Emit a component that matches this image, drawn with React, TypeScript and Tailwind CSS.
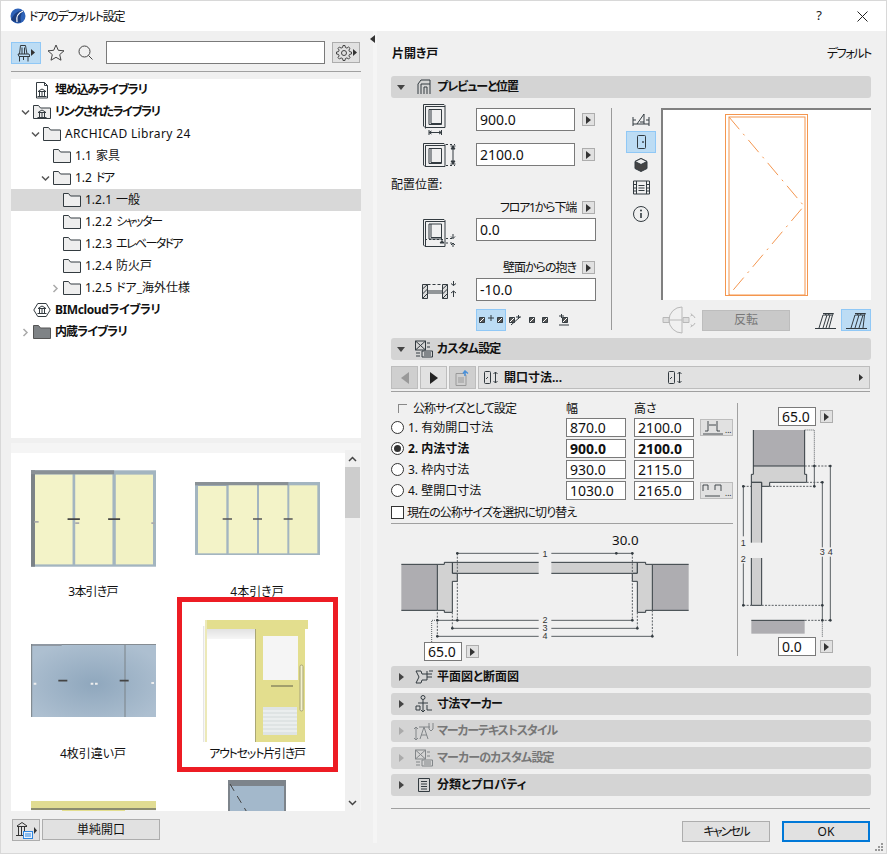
import type { ReactNode } from "react";

const dark = "#333b40";

function Arrow({ className = "" }: { className?: string }) {
  return (
    <button className={`flex h-[13px] w-[13px] shrink-0 items-center justify-center border border-[#adadad] bg-[#e1e1e1] ${className}`}>
      <svg width="5" height="8" viewBox="0 0 5 8"><path d="M0 0l5 4-5 4z" fill="#333" /></svg>
    </button>
  );
}

function Field({ value, className = "", bold = false }: { value: string; className?: string; bold?: boolean }) {
  return (
    <div className={`flex shrink-0 items-center border border-[#7a7a7a] bg-white pl-[3px] text-[14px] leading-none text-[#111] ${bold ? "font-bold" : ""} ${className}`}>
      {value}
    </div>
  );
}

function Ic({ w = 16, h = 16, vb, children, className = "" }: { w?: number; h?: number; vb?: string; children: ReactNode; className?: string }) {
  return (
    <svg width={w} height={h} viewBox={vb ?? `0 0 ${w} ${h}`} fill="none" stroke={dark} strokeWidth="1" className={`shrink-0 ${className}`}>
      {children}
    </svg>
  );
}

function Folder({ dark: filled = false }: { dark?: boolean }) {
  return (
    <Ic w={18} h={16}>
      <path d="M.5 14.5v-13h5l2 2.5h10v10.500z" fill={filled ? "#7f8386" : "#eeeeee"} stroke={filled ? "#555" : dark} />
    </Ic>
  );
}

function Bank({ x = 0, y = 0 }: { x?: number; y?: number }) {
  return (
    <g transform={`translate(${x} ${y})`} stroke={dark}>
      <path d="M.5 8.500h9M1 3.500h8M2.500 4v4M5 4v4M7.500 4v4M1.500 3l3.500-2 3.500 2" />
    </g>
  );
}

function Chevron({ color = "#555", open = false }: { color?: string; open?: boolean }) {
  return (
    <svg width="9" height="9" viewBox="0 0 9 9" fill="none" stroke={color} strokeWidth="1.500">
      <path d={open ? "M1 2.500l3.500 3.500 3.500-3.500" : "M2.500 1l3.500 3.500-3.500 3.500"} />
    </svg>
  );
}

type TreeRow = { depth: number; num?: string; label: string; bold?: boolean; chevron?: "open" | "closed" | "muted"; icon: ReactNode; selected?: boolean; fit?: string };

const treeRows: TreeRow[] = [
  {
    depth: 0, label: "埋め込みライブラリ", bold: true, fit: "tracking-[-1.1px]",
    icon: (
      <Ic w={18} h={17}>
        <path d="M3.500.5h8l3 3v12.500h-11z" />
        <path d="M11.500.5v3h3" />
        <Bank x={4} y={6} />
      </Ic>
    ),
  },
  {
    depth: 0, label: "リンクされたライブラリ", bold: true, chevron: "open", fit: "tracking-[-1.4px]",
    icon: (
      <Ic w={18} h={16}>
        <path d="M.5 14.500v-13h5l2 2.500h10v10.500z" fill="#eee" />
        <Bank x={4} y={5} />
      </Ic>
    ),
  },
  { depth: 1, label: "ARCHICAD Library 24", chevron: "open", icon: <Folder />, fit: "tracking-[0.35px]" },
  { depth: 2, num: "1.1", label: "家具", icon: <Folder /> },
  { depth: 2, num: "1.2", label: "ドア", chevron: "open", icon: <Folder />, fit: "tracking-[-1.5px]" },
  { depth: 3, num: "1.2.1", label: "一般", icon: <Folder />, selected: true },
  { depth: 3, num: "1.2.2", label: "シャッター", icon: <Folder />, fit: "tracking-[-1.4px]" },
  { depth: 3, num: "1.2.3", label: "エレベータドア", icon: <Folder />, fit: "tracking-[-1.6px]" },
  { depth: 3, num: "1.2.4", label: "防火戸", icon: <Folder /> },
  { depth: 3, num: "1.2.5", label: "ドア_海外仕様", chevron: "muted", icon: <Folder /> },
  {
    depth: 0, label: "BIMcloudライブラリ", bold: true, fit: "tracking-[-0.4px]",
    icon: (
      <Ic w={18} h={16}>
        <path d="M.8 8l4-6.500h8.400l4 6.500-4 6.500H4.800z" />
        <Bank x={4} y={3} />
      </Ic>
    ),
  },
  { depth: 0, label: "内蔵ライブラリ", bold: true, chevron: "muted", icon: <Folder dark />, fit: "tracking-[-0.9px]" },
];

function Tree() {
  return (
    <div className="mt-[7px] h-[359px] bg-white">
      {treeRows.map((r) => (
        <div key={r.label} className={`flex h-[22px] items-center text-[12px] text-[#111] ${r.selected ? "bg-[#d8d8d8]" : ""}`}>
          <div className="shrink-0" style={{ width: (r.depth + 1) * 10 - 3 }} />
          <div className="flex w-[14px] shrink-0 justify-center">
            {r.chevron && <Chevron open={r.chevron === "open"} color={r.chevron === "muted" ? "#aaa" : "#555"} />}
          </div>
          <div className="ml-px">{r.icon}</div>
          {r.num && <span className="ml-[4px] mr-[4px]">{r.num}</span>}
          <span className={`${r.num ? "" : "ml-[4px]"} ${r.bold ? "font-bold" : ""} ${r.fit ?? ""}`}>{r.label}</span>
        </div>
      ))}
    </div>
  );
}

function Sliding3() {
  return (
    <svg width="125" height="97" viewBox="90 60 376 290">
      <rect x="90" y="60" width="376" height="290" fill="#a3b5c0" />
      <rect x="90" y="60" width="12" height="290" fill="#7b8287" />
      <rect x="90" y="60" width="250" height="12" fill="#8a9196" />
      <rect x="102" y="73" width="113" height="270" fill="#f3f3c8" />
      <rect x="223" y="73" width="112" height="270" fill="#f3f3c8" />
      <rect x="345" y="73" width="112" height="270" fill="#f2f2c4" />
      <path d="M200 207h37M322 207h36" stroke="#444" strokeWidth="5" />
      <path d="M100 215h13M223 219h12M452 219h10" stroke="#aaa" strokeWidth="5" />
    </svg>
  );
}

function Sliding4() {
  return (
    <svg width="125" height="73" viewBox="583 96 375 219">
      <rect x="583" y="96" width="375" height="219" fill="#a3b5c0" />
      <rect x="583" y="96" width="280" height="10" fill="#8a9196" />
      <rect x="592" y="108" width="85" height="202" fill="#f3f3c8" />
      <rect x="684" y="106" width="85" height="204" fill="#f3f3c8" />
      <rect x="775" y="106" width="85" height="204" fill="#f3f3c8" />
      <rect x="866" y="106" width="84" height="204" fill="#f2f2c4" />
      <path d="M666 207h28M757 207h27M849 207h27" stroke="#555" strokeWidth="4" />
    </svg>
  );
}

function BlueSliding() {
  return (
    <svg width="125" height="73" viewBox="91 582 375 219">
      <defs>
        <radialGradient id="bd" cx="0.5" cy="0.55" r="0.6">
          <stop offset="0" stopColor="#8fa7bd" />
          <stop offset="1" stopColor="#adbfd0" />
        </radialGradient>
      </defs>
      <rect x="91" y="582" width="375" height="219" fill="url(#bd)" />
      <path d="M91 585h92M183 583h283" stroke="#858c92" strokeWidth="4" />
      <path d="M93 582v219M373 585v216" stroke="#7b8287" strokeWidth="3" />
      <path d="M173 692h27M357 692h27" stroke="#444" strokeWidth="5" />
      <path d="M270 701h24M99 701h8M452 699h9" stroke="#eee" strokeWidth="6" strokeDasharray="8 5" />
    </svg>
  );
}

function YellowDoor() {
  return (
    <svg width="105" height="123" viewBox="0 0 105 123" className="-ml-[3px] mt-[2px]">
      <defs>
        <linearGradient id="sh" x1="0" y1="0" x2="0" y2="1">
          <stop offset="0" stopColor="#e2e2e2" />
          <stop offset="1" stopColor="#f6f6f6" />
        </linearGradient>
        <linearGradient id="sd" x1="0" y1="0" x2="1" y2="0">
          <stop offset="0" stopColor="#dddddd" />
          <stop offset="1" stopColor="#ffffff" />
        </linearGradient>
      </defs>
      <rect x="0" y="6" width="2" height="116" fill="url(#sd)" />
      <rect x="2" y="0" width="103" height="9" fill="#e3de8e" />
      <rect x="2" y="0" width="2" height="122" fill="#ece9b8" />
      <rect x="4" y="9" width="48" height="10" fill="url(#sh)" />
      <rect x="52" y="9" width="50" height="113" fill="#e3de8e" />
      <rect x="52" y="9" width="1" height="113" fill="#aaa775" />
      <rect x="60" y="16" width="35" height="44" fill="#f5f5f5" />
      <rect x="60" y="87" width="34" height="28" fill="#dfe4e4" />
      <path d="M60 91h34M60 95h34M60 99h34M60 103h34M60 107h34M60 111h34" stroke="#f6f8f8" />
      <path d="M68 66h22" stroke="#8c8a60" strokeWidth="1.500" />
      <rect x="97" y="45" width="3" height="46" rx="1.500" fill="#f3f1ce" stroke="#a6a376" />
    </svg>
  );
}

function YellowWide() {
  return (
    <svg width="125" height="83" viewBox="0 0 125 83">
      <rect width="125" height="8" fill="#e1dc92" />
      <rect y="8" width="125" height="75" fill="#f2f2f2" />
      <rect x="31" y="8" width="63" height="75" fill="#e3de8e" />
      <rect y="7" width="125" height="2" fill="#8c8c70" />
    </svg>
  );
}

function BlueSquare() {
  return (
    <svg width="58" height="125" viewBox="0 0 58 125">
      <rect width="58" height="125" fill="#7d848b" />
      <rect x="2" y="6" width="54" height="119" fill="#a3b8cb" />
      <path d="M2 4l54 90" stroke="#444" strokeDasharray="8 6" />
    </svg>
  );
}

function Thumbs() {
  const items = [
    { art: <Sliding3 />, label: "3本引き戸", fit: "tracking-[-0.8px]" },
    { art: <Sliding4 />, label: "4本引き戸" },
    { art: <BlueSliding />, label: "4枚引違い戸" },
    { art: <YellowDoor />, label: "アウトセット片引き戸", fit: "tracking-[-1.2px]" },
    { art: <YellowWide />, label: "" },
    { art: <BlueSquare />, label: "" },
  ];
  return (
    <div className="relative mt-[5px] flex h-[368px] bg-[#f5f5f5] pt-[10px]">
      <div className="relative h-[358px] w-[334px] overflow-hidden bg-white pt-[3px]">
        <div className="grid w-[328px] grid-cols-2">
          {items.map((it, i) => (
            <div key={i} className="flex h-[162px] flex-col items-center">
              <div className="flex h-[125px] items-center justify-center">{it.art}</div>
              <div className={`mt-[2px] flex h-[18px] items-center whitespace-nowrap text-[12px] text-[#111] ${it.fit ?? ""}`}>{it.label}</div>
            </div>
          ))}
        </div>
        <div className="absolute left-[166px] top-[144px] h-[175px] w-[161px] border-[5px] border-[#ed1c24]" />
      </div>
      <div className="relative -mt-[3px] flex h-[361px] w-[15px] flex-col items-center bg-[#f0f0f0]">
        <div className="flex h-[17px] items-center">
          <svg width="9" height="6" viewBox="0 0 9 6" fill="none" stroke="#444" strokeWidth="1.500"><path d="M1 5l3.500-3.500 3.500 3.500" /></svg>
        </div>
        <div className="h-[51px] w-[15px] bg-[#cdcdcd]" />
        <div className="mt-auto flex h-[17px] items-center">
          <svg width="9" height="6" viewBox="0 0 9 6" fill="none" stroke="#444" strokeWidth="1.500"><path d="M1 1l3.500 3.500 3.500-3.500" /></svg>
        </div>
      </div>
    </div>
  );
}

function LeftColumn() {
  return (
    <div className="w-[350px] shrink-0">
      <div className="flex h-[23px] items-center">
        <button className="flex h-[22px] w-[30px] items-center justify-center gap-px border border-[#90c8f6] bg-[#bcdcf4]">
          <Ic w={13} h={18}>
            <path d="M2.500 10L3.500 1.500h5L10 10M1 10h11l1 2.500H2zM2.500 12.500V17.500M6.500 12.500V16M11 12.500V17.500M5 10V3.500M7.500 10V3.500" />
          </Ic>
          <svg width="4" height="7" viewBox="0 0 4 7"><path d="M0 0l4 3.500-4 3.500z" fill="#333" /></svg>
        </button>
        <svg width="18" height="17" viewBox="0 0 18 17" fill="none" stroke="#444" className="ml-[6px]">
          <path d="M9 1l2.300 5.300 5.700.5-4.300 3.800 1.300 5.600L9 13.300 4 16.200l1.300-5.600L1 6.800l5.700-.5z" />
        </svg>
        <svg width="16" height="15" viewBox="0 0 16 15" fill="none" stroke="#444" className="ml-[13px]">
          <circle cx="6.500" cy="6.500" r="5.500" /><path d="M10.500 10.500l4 4" />
        </svg>
        <div className="ml-[12px] h-[23px] w-[219px] border border-[#7a7a7a] bg-white" />
        <button className="ml-[7px] flex h-[21px] w-[28px] items-center justify-center gap-px border border-[#adadad] bg-[#e1e1e1]">
          <svg width="16" height="16" viewBox="0 0 16 16" fill="none" stroke="#444">
            <circle cx="8" cy="8" r="2.500" />
            <path d="M7 .5h2l.4 2 1.500.6 1.700-1.100 1.400 1.400-1.100 1.700.6 1.500 2 .4v2l-2 .4-.6 1.500 1.100 1.700-1.400 1.400-1.700-1.100-1.500.6-.4 2H7l-.4-2-1.500-.6-1.700 1.100-1.400-1.400 1.100-1.700-.6-1.500-2-.4V7l2-.4.6-1.500L2 3.400 3.400 2l1.700 1.100 1.500-.6z" />
          </svg>
          <svg width="4" height="7" viewBox="0 0 4 7"><path d="M0 0l4 3.500-4 3.500z" fill="#333" /></svg>
        </button>
      </div>
      <div className="mt-[7px] h-px bg-[#a0a0a0]" />
      <Tree />
      <Thumbs />
      <div className="mt-[8px] flex h-[22px] items-start">
        <button className="ml-px flex h-[22px] w-[28px] items-center justify-center gap-px border border-[#adadad] bg-[#e1e1e1]">
          <svg width="18" height="18" viewBox="0 0 18 18" fill="none" stroke="#333">
            <path d="M1 14.500h11M2 5.500h10M3.500 6v8M6.500 6v8M9.500 6v8M2 5l5-3.500L12 5" />
            <rect x="8.500" y="10.500" width="9" height="7" fill="#e8f2fc" stroke="#2e86e0" />
            <path d="M10 13h6M10 15h6" stroke="#2e86e0" />
          </svg>
          <svg width="3" height="7" viewBox="0 0 3 7"><path d="M0 0l3 3.500-3 3.500z" fill="#333" /></svg>
        </button>
        <button className="ml-[2px] h-[21px] w-[118px] border border-[#adadad] bg-[#e1e1e1] text-[12px] text-[#111]">単純開口</button>
      </div>
    </div>
  );
}

function Section({ open = false, icon, label, disabled = false, fit = "" }: { open?: boolean; icon: ReactNode; label: string; disabled?: boolean; fit?: string }) {
  return (
    <div className={`flex h-[22px] items-center rounded-[3px] bg-[#d4d4d4] text-[12px] font-bold ${disabled ? "text-[#777]" : "text-[#111]"}`}>
      <div className="flex w-[20px] shrink-0 justify-center">
        {open ? (
          <svg width="8" height="5" viewBox="0 0 8 5"><path d="M0 0h8L4 5z" fill="#444" /></svg>
        ) : (
          <svg width="5" height="8" viewBox="0 0 5 8"><path d="M0 0l5 4-5 4z" fill={disabled ? "#aaa" : "#444"} /></svg>
        )}
      </div>
      <div className={`flex w-[26px] shrink-0 justify-center ${disabled ? "opacity-50" : ""}`}>{icon}</div>
      <span className={fit}>{label}</span>
    </div>
  );
}

function ToolBtn({ active = false, children, className = "" }: { active?: boolean; children: ReactNode; className?: string }) {
  return (
    <div className={`flex h-[22px] w-[30px] shrink-0 items-center justify-center border ${active ? "border-[#90c8f6] bg-[#bcdcf4]" : "border-transparent"} ${className}`}>
      {children}
    </div>
  );
}

const MiniPair = () => (
  <>
    <path d="M.5 3.500h5v5h-5z" fill="#555" />
    <path d="M1 8l4-4" stroke="#fff" />
  </>
);

function LegIcon({ wide = false }: { wide?: boolean }) {
  return (
    <Ic w={21} h={17}>
      <path d="M0 16.500h21" />
      {wide ? (
        <path d="M5 16L9 3h9.500M9 16l4-13M13 16l4-13M17 16l1.500-13M9 1.500h10.500l-1 1.500M11 3l2-1.500M14 3l2-1.500" />
      ) : (
        <path d="M4 16L8 3h9.500M8 16l4-13M11 16l4-13M14 16l3.500-13M8 1.500h10.500l-1 1.500M10 3l2-1.500M13 3l2-1.500" />
      )}
    </Ic>
  );
}

// 3D door box used by the size and position icons
const DoorBox = ({ h = 23 }: { h?: number }) => (
  <>
    <path d={`M.5.5h20.500l1 1v${h - 1}H2l-1.500-1.500z`} />
    <path d={`M2.500 2.500h19.500M2.500 2.500v${h - 1}`} />
    <path d={`M6 5.500h12.500v${h - 8}H6z`} />
    <path d={`M8 5.500v${h - 9}h10.500`} />
  </>
);

function PreviewSection() {
  return (
    <div className="flex h-[240px]">
      <div className="w-[220px] shrink-0 pt-[10px]">
        <div className="flex h-[23px] items-center">
          <div className="flex w-[85px] justify-start pl-[32px]">
            <Ic w={24} h={32}>
              <DoorBox />
              <path d="M6 28.500h12.500M6 26v5M18.500 26v5M6 28.500l2.500-1.500M6 28.500l2.500 1.500M18.500 28.500l-2.500-1.500M18.500 28.500l-2.500 1.500" />
            </Ic>
          </div>
          <Field value="900.0" className="h-[23px] w-[99px]" />
          <Arrow className="ml-[7px]" />
        </div>
        <div className="mt-[12px] flex h-[23px] items-center">
          <div className="flex w-[85px] pl-[32px]">
            <Ic w={34} h={24}>
              <DoorBox />
              <path d="M23 1.500h9M23 22.500h9" strokeDasharray="2 2" />
              <path d="M30 3v18M27.500 3h5M27.500 21h5M30 3l-2 3h4zM30 21l-2-3h4z" fill={dark} />
            </Ic>
          </div>
          <Field value="2100.0" className="h-[23px] w-[99px]" />
          <Arrow className="ml-[7px]" />
        </div>
        <div className="mt-[12px] h-[14px] text-[12px] leading-[14px] text-[#111]">配置位置:</div>
        <div className="mt-[9px] flex h-[13px] items-center justify-end pr-[16px] text-[12px] text-[#111]">
          <span className="mr-[6px] tracking-[-1.2px]">フロア1から下端</span>
          <Arrow />
        </div>
        <div className="mt-[4px] flex h-[23px] items-center">
          <div className="flex w-[85px] pl-[32px]">
            <Ic w={34} h={28} className="mt-[7px]">
              <path d="M.5.5h20.500l1 1v26H2l-1.500-1.500zM2.500 2.500h19.500M2.500 2.500v25" />
              <path d="M6 5h12.500v15H6zM8 5v13.500h10.500" />
              <path d="M2 20.500h20" strokeDasharray="2 2" />
              <path d="M17 24l2-2.500 2 2.500z" fill={dark} />
              <path d="M23 19.500h6M23 24h6" strokeDasharray="2 2" />
              <path d="M30 15v4.500M30 24v4.500M28 17.500l2 2 2-2M28 26l2-2 2 2" />
            </Ic>
          </div>
          <Field value="0.0" className="h-[23px] w-[120px]" />
        </div>
        <div className="mt-[20px] flex h-[13px] items-center justify-end pr-[16px] text-[12px] text-[#111]">
          <span className="mr-[6px] tracking-[-1px]">壁面からの抱き</span>
          <Arrow />
        </div>
        <div className="mt-[4px] flex h-[23px] items-center">
          <div className="flex w-[85px] pl-[31px]">
            <Ic w={36} h={20}>
              <path d="M.5 4.500h5v14h-5zM20.500 4.500h5v14h-5z" fill="#ddd" />
              <path d="M.5 9l5-4.500M.5 14l5-5M.5 18.500l5-5M20.500 9l5-4.500M20.500 14l5-5M20.500 18.500l5-5" />
              <path d="M5.500 4.500h15" strokeDasharray="3 2" />
              <path d="M5.500 11h15M5.500 13h15" />
              <path d="M31.500 1v4.500M31.500 11v6M29 3.500l2.500 2 2.500-2M29 13l2.500-2 2.500 2" />
            </Ic>
          </div>
          <Field value="-10.0" className="h-[23px] w-[120px]" />
        </div>
        <div className="ml-[85px] mt-[8px] flex items-center">
          <ToolBtn active>
            <Ic w={24} h={12}>
              <MiniPair />
              <g transform="translate(18 0)"><MiniPair /></g>
              <path d="M12 1v6M9 4h6" />
            </Ic>
          </ToolBtn>
          <Ic w={13} h={12} className="ml-[3px]">
            <MiniPair />
            <path d="M7 3h5M9.500 1v4M2 11l9-8" />
          </Ic>
          <Ic w={8} h={12} className="ml-[7px]"><MiniPair /></Ic>
          <Ic w={8} h={12} className="ml-[5px]"><MiniPair /></Ic>
          <Ic w={13} h={12} className="ml-[8px]">
            <g transform="translate(4 0)"><MiniPair /></g>
            <path d="M1 2h5M3.500 0v4M1 11h10" />
          </Ic>
        </div>
      </div>
      <div className="mt-[10px] h-[222px] w-px bg-[#9a9a9a]" />
      <div className="ml-[14px] mt-[15px] flex w-[30px] shrink-0 flex-col items-center">
        <Ic w={18} h={14}>
          <path d="M1 4v9M17 4v9M1 11h16M1 7h3M14 7h3M5 11L12 1v10M8 9h4" />
        </Ic>
        <ToolBtn active className="mt-[4px]">
          <Ic w={9} h={14}><rect x=".5" y=".5" width="8" height="13" rx="1" /><circle cx="6" cy="7" r=".5" fill={dark} /></Ic>
        </ToolBtn>
        <Ic w={14} h={14} className="mt-[5px]">
          <path d="M7 .5l6 3v7l-6 3-6-3v-7z" fill="#444" />
          <path d="M7 .5l6 3-6 3-6-3z" fill="#eee" />
        </Ic>
        <Ic w={17} h={15} className="mt-[8px]">
          <path d="M.5 1h16v13H.5zM3.500 1v13M13.500 1v13M.5 4.500h3M.5 8h3M.5 11h3M13.500 4.500h3M13.500 8h3M13.500 11h3M5.500 5.500h6M5.500 8h6M5.500 10.500h6" />
        </Ic>
        <Ic w={16} h={16} className="mt-[11px]">
          <circle cx="8" cy="8" r="7.500" />
          <path d="M8 7v5" strokeWidth="1.600" />
          <circle cx="8" cy="4.500" r="1" fill={dark} stroke="none" />
        </Ic>
      </div>
      <div className="ml-[5px] flex-1 pt-[10px]">
        <div className="h-[192px] w-[210px] border-l-2 border-t-2 border-[#808080] bg-white">
          <svg width="208" height="190" viewBox="663 110 208 190" fill="none" stroke="#f4964f" className="block">
            <rect x="725.500" y="114.500" width="82" height="181" />
            <rect x="729" y="117" width="76" height="178" />
            <path d="M729 117l75 89-75 89" strokeDasharray="16 6 2 6" />
          </svg>
        </div>
        <div className="mt-[9px] flex h-[22px] items-center">
          <svg width="36" height="28" viewBox="0 0 36 28" fill="none" stroke="#b8b8b8" className="-my-[3px] ml-px">
            <path d="M20 1a13 13 0 0 0 0 26zM7 14h13" />
            <path d="M1 11.500h6v5H1zM21 11.500h6v5h-6z" fill="#ddd" />
            <path d="M30 9a5 5 0 0 1 3 3M33 17a5 5 0 0 1-3 3M29 7.500L30 9l-1.500 1M28.500 21l1.500-1-1-1.500" />
          </svg>
          <button className="ml-[4px] h-[21px] w-[88px] border border-[#bdbdbd] bg-[#c9c9c9] text-[12px] text-[#777]">反転</button>
          <div className="ml-[25px]"><LegIcon /></div>
          <ToolBtn active className="ml-[5px]"><LegIcon wide /></ToolBtn>
        </div>
      </div>
    </div>
  );
}

function NavBtn({ muted = false, children }: { muted?: boolean; children: ReactNode }) {
  return (
    <button className={`flex h-[23px] w-[27px] shrink-0 items-center justify-center border border-[#bdbdbd] ${muted ? "bg-[#cfcfcf]" : "bg-[#e1e1e1]"}`}>
      {children}
    </button>
  );
}

const SizeGlyph = () => (
  <Ic w={16} h={13}>
    <rect x=".5" y=".5" width="6" height="12" rx="1" />
    <path d="M11.500 1v11M9.500 3l2-2 2 2M9.500 10l2 2 2-2" />
    <path d="M2 8l2-2" />
  </Ic>
);

function Radio({ checked = false }: { checked?: boolean }) {
  return (
    <span className="flex h-[13px] w-[13px] shrink-0 items-center justify-center rounded-full border border-[#333] bg-white">
      {checked && <span className="h-[7px] w-[7px] rounded-full bg-[#333]" />}
    </span>
  );
}

const sizeRows = [
  { label: "1. 有効開口寸法", w: "870.0", h: "2100.0", glyph: "a" },
  { label: "2. 内法寸法", w: "900.0", h: "2100.0", on: true },
  { label: "3. 枠内寸法", w: "930.0", h: "2115.0" },
  { label: "4. 壁開口寸法", w: "1030.0", h: "2165.0", glyph: "b" },
];

function HorizontalDiagram() {
  const s = "#5a5f63";
  const dot = (x: number, y: number) => <circle key={`${x}-${y}`} cx={x} cy={y} r="4" fill={dark} stroke="none" />;
  return (
    <svg width="342" height="116" viewBox="33 18 1026 348" fill="none" stroke={dark} strokeWidth="3" className="block">
      <rect x="64" y="133" width="108" height="138" fill="#aeadb1" stroke="none" />
      <rect x="817" y="133" width="109" height="138" fill="#aeadb1" stroke="none" />
      <path d="M64 133h108M64 271h108M817 133h109M817 271h109" />
      <path d="M476 127H217v33h259" fill="#cfcfcf" />
      <path d="M514 127h258v33H514" fill="#cfcfcf" />
      <path d="M172 133h21v-6h24v33h15v24h-15v93h-24v-6h-21z" fill="#d2d2d2" />
      <path d="M817 133h-20v-6h-25v33h-15v24h15v93h25v-6h20z" fill="#d2d2d2" />
      <g stroke={s}>
        <path d="M232 100h244M514 100h243" />
        <path d="M172 301h304M514 301h243M217 325h259M514 325h258M172 349h304M514 349h303" />
      </g>
      <g stroke={s} strokeDasharray="6 4">
        <path d="M232 100v200M757 100v200M172 277v72M217 277v48M772 277v48M817 271v78" />
      </g>
      <path d="M155 366v-65h17" stroke={s} strokeDasharray="3 3" />
      {[dot(232, 100), dot(709, 100), dot(757, 100), dot(172, 301), dot(232, 301), dot(757, 301), dot(217, 325), dot(772, 325), dot(172, 349), dot(817, 349)]}
      <g fill="#333" stroke="none" fontSize="27" textAnchor="middle" fontFamily="'Liberation Sans', sans-serif">
        <text x="495" y="110">1</text>
        <text x="495" y="310">2</text>
        <text x="495" y="334">3</text>
        <text x="495" y="358">4</text>
      </g>
      <text x="736" y="75" fontSize="40" fill="#111" stroke="none" textAnchor="middle">30.0</text>
    </svg>
  );
}

function VerticalDiagram() {
  const s = "#5a5f63";
  const dot = (x: number, y: number) => <circle key={`${x}-${y}`} cx={x} cy={y} r="4" fill={dark} stroke="none" />;
  return (
    <svg width="133" height="211" viewBox="1074 198 399 633" fill="none" stroke={dark} strokeWidth="3" className="block">
      <rect x="1120" y="210" width="154" height="108" fill="#aeadb1" stroke="none" />
      <path d="M1120 318V210M1274 318V210" />
      <path d="M1120 318h154v25h6v24h-111v12h-24v-12h-31v-24h6z" fill="#d2d2d2" />
      <path d="M1114 548V367h31v181" fill="#cfcfcf" />
      <path d="M1114 594v142h31V594" fill="#cfcfcf" />
      <rect x="1114" y="781" width="160" height="40" fill="#aeadb1" stroke="none" />
      <path d="M1114 781h160" />
      <g stroke={s}>
        <path d="M1090 379v150M1090 610v126M1327 367v195M1327 590v191M1351 318v244M1351 590v191M1303 318v61" />
      </g>
      <g stroke={s} strokeDasharray="6 4">
        <path d="M1274 318h77M1169 379h134M1090 379h24M1090 736h24M1145 736h182M1280 367h47M1274 781h77" />
      </g>
      <path d="M1274 210h29v108M1327 781v50" stroke={s} strokeDasharray="3 3" />
      {[dot(1090, 379), dot(1090, 736), dot(1303, 318), dot(1303, 379), dot(1327, 367), dot(1351, 318), dot(1327, 736), dot(1327, 781), dot(1351, 781)]}
      <g fill="#333" stroke="none" fontSize="27" textAnchor="middle" fontFamily="'Liberation Sans', sans-serif">
        <text x="1090" y="557">1</text>
        <text x="1090" y="606">2</text>
        <text x="1327" y="585">3</text>
        <text x="1351" y="585">4</text>
      </g>
    </svg>
  );
}

function CustomSection() {
  return (
    <div>
      <div className="mt-[6px] flex gap-[2px] pr-px">
        <NavBtn muted>
          <svg width="8" height="12" viewBox="0 0 8 12"><path d="M8 0L0 6l8 6z" fill="#999" /></svg>
        </NavBtn>
        <NavBtn>
          <svg width="8" height="12" viewBox="0 0 8 12"><path d="M0 0l8 6-8 6z" fill="#222" /></svg>
        </NavBtn>
        <NavBtn muted>
          <svg width="16" height="16" viewBox="0 0 16 16" fill="none" stroke="#999">
            <path d="M1 3.500h8l2 2v10H1zM3 8h6M3 10h6M3 12h6" />
            <path d="M10 6V2M8 3.500L10 1l3 2.500" stroke="#4a90d9" strokeWidth="1.500" />
          </svg>
        </NavBtn>
        <div className="flex h-[23px] flex-1 items-center border border-[#bdbdbd] bg-[#e1e1e1] pl-[5px] text-[12px] font-bold text-[#111]">
          <SizeGlyph />
          <span className="ml-[4px] w-[164px]">開口寸法...</span>
          <SizeGlyph />
          <svg width="4" height="7" viewBox="0 0 4 7" className="ml-auto mr-[6px]"><path d="M0 0l4 3.500-4 3.500z" fill="#333" /></svg>
        </div>
      </div>
      <div className="mt-[2px] h-px w-[479px] bg-[#a0a0a0]" />
      <div className="flex">
        <div className="w-[346px] shrink-0">
          <div className="flex h-[25px] items-end text-[12px] text-[#111]">
            <div className="flex h-[16px] items-center">
              <span className="ml-[7px] mt-[3px] h-[9px] w-[9px] self-start border-l border-t border-[#888]" />
              <span className="ml-[6px] w-[153px] tracking-[-0.9px]">公称サイズとして設定</span>
              <span className="w-[68px]">幅</span>
              <span>高さ</span>
            </div>
          </div>
          <div className="mt-[1px] flex flex-col gap-[2px]">
            {sizeRows.map((r) => (
              <div key={r.label} className="flex h-[19px] items-center text-[12px] text-[#111]">
                <Radio checked={r.on} />
                <span className={`ml-[4px] w-[158px] ${r.on ? "font-bold" : ""}`}>{r.label}</span>
                <Field value={r.w} bold={r.on} className="h-[19px] w-[60px]" />
                <Field value={r.h} bold={r.on} className="ml-[8px] h-[19px] w-[60px]" />
                {r.glyph && (
                  <div className="ml-[6px] flex h-[17px] w-[33px] items-center border border-[#bdbdbd] bg-[#e1e1e1] pl-px">
                    <Ic w={22} h={15}>
                      {r.glyph === "a" ? (
                        <path d="M3 11h3V1M15 1v10h3M7 5h7M1 14h20" strokeWidth=".9" />
                      ) : (
                        <path d="M1 8V2h5v5M13 7V2h6v6M3 13h15" strokeWidth=".9" />
                      )}
                    </Ic>
                    <span className="ml-px mt-[5px] text-[8px] leading-none">...</span>
                  </div>
                )}
              </div>
            ))}
          </div>
          <div className="mt-[6px] flex h-[13px] items-center text-[12px] text-[#111]">
            <span className="h-[13px] w-[13px] shrink-0 border border-[#333] bg-white" />
            <span className="ml-[3px] tracking-[-0.9px]">現在の公称サイズを選択に切り替え</span>
          </div>
          <div className="mt-[4px] h-px w-[342px] bg-[#a0a0a0]" />
          <div className="mt-[2px]"><HorizontalDiagram /></div>
          <div className="ml-[33px] flex items-center gap-[4px]">
            <Field value="65.0" className="h-[19px] w-[38px]" />
            <Arrow />
          </div>
        </div>
        <div className="mt-[11px] flex h-[253px] flex-1 flex-col border-l border-[#a0a0a0]">
          <div className="ml-[40px] mt-[4px] flex items-center gap-[4px]">
            <Field value="65.0" className="h-[19px] w-[38px]" />
            <Arrow />
          </div>
          <VerticalDiagram />
          <div className="ml-[40px] flex items-center gap-[4px]">
            <Field value="0.0" className="h-[19px] w-[38px]" />
            <Arrow />
          </div>
        </div>
      </div>
    </div>
  );
}

function RightColumn() {
  return (
    <div className="w-[480px] shrink-0">
      <div className="flex h-[25px] items-center justify-between text-[#111]">
        <span className="ml-px text-[12px] font-bold">片開き戸</span>
        <span className="text-[12px] tracking-[-1.4px]">デフォルト</span>
      </div>
      <div className="mt-[10px]">
        <Section
          open
          label="プレビューと位置"
          fit="tracking-[-1px]"
          icon={
            <Ic w={14} h={16}>
              <path d="M1 15V5l3-4h9v14M4 15V5h9M7 15V8h3v7" />
            </Ic>
          }
        />
      </div>
      <PreviewSection />
      <Section
        open
        label="カスタム設定"
        fit="tracking-[-0.8px]"
        icon={
          <Ic w={18} h={18}>
            <path d="M.5 1h10v9H.5zM.5 1l10 9M10.500 1l-10 9M12 3h3M12 7h3M7 11h10.500v6H7zM9 13h7M9 15h7M1 13h4M1 16h4" />
          </Ic>
        }
      />
      <CustomSection />
      <div className="mt-[5px] flex flex-col gap-[5px]">
        <Section
          label="平面図と断面図"
          icon={
            <Ic w={18} h={14}>
              <path d="M1 1h5l1 3h10M1 13h5l1-3h5V1M1 1l3 6-3 6M12 7h5M14 1h4" />
            </Ic>
          }
        />
        <Section
          label="寸法マーカー"
          fit="tracking-[-0.7px]"
          icon={
            <Ic w={18} h={18}>
              <circle cx="8" cy="2.500" r="2" />
              <path d="M8 5v12M3 8h10M6 15l2 2 2-2" />
              <path d="M1 11h4v4H1zM12 10v5h5" />
            </Ic>
          }
        />
        <Section
          disabled
          label="マーカーテキストスタイル"
          fit="tracking-[-1.1px]"
          icon={
            <Ic w={20} h={18}>
              <path d="M2 5v13M0 7l2-2 2 2M0 16l2 2 2-2M6 17l4-12 4 12M7 13h6M5 5h11M15 1v6l2 2 2-2V1" />
            </Ic>
          }
        />
        <Section
          disabled
          label="マーカーのカスタム設定"
          fit="tracking-[-0.8px]"
          icon={
            <Ic w={18} h={18}>
              <path d="M.5 1h10v9H.5zM.5 1l10 9M10.500 1l-10 9M12 3h3M12 7h3M7 11h10.500v6H7zM9 13h7M9 15h7M1 13h4M1 16h4" />
            </Ic>
          }
        />
        <Section
          label="分類とプロパティ"
          icon={
            <Ic w={12} h={14}>
              <path d="M.5.5h11v13H.5zM3 3.500h6M3 6h6M3 8.500h6M3 11h6" />
            </Ic>
          }
        />
      </div>
      <div className="mt-[12px] h-px w-[479px] bg-[#a0a0a0]" />
      <div className="mt-[12px] flex justify-end gap-[12px] pr-px">
        <button className="h-[21px] w-[88px] border border-[#adadad] bg-[#e1e1e1] text-[12px] tracking-[-1.8px] text-[#111]">キャンセル</button>
        <button className="h-[21px] w-[88px] border-2 border-[#0078d7] bg-[#e1e1e1] text-[12px] text-[#111]">OK</button>
      </div>
    </div>
  );
}

export default function App() {
  return (
    <div className="relative h-[854px] w-[887px] overflow-hidden border border-[#d8d8d8] bg-[#f0f0f0] [font-family:'Noto_Sans','Noto_Sans_CJK_JP',sans-serif] [font-feature-settings:'palt']">
      <div className="flex h-[30px] items-center bg-white">
        <svg width="16" height="16" viewBox="0 0 16 16" className="ml-[9px]">
          <circle cx="8" cy="8" r="7.500" fill="#2d62b8" />
          <path d="M1 12C4 5 9 2 14 3c-3 2-4 6-3 11-3 1-7 0-10-2z" fill="#1c3f80" />
          <path d="M7 14c-1-5 1-9 6-11" fill="none" stroke="#fff" strokeWidth="1.200" />
        </svg>
        <span className="ml-[3px] mt-px text-[12px] tracking-[-1.2px] text-[#111]">ドアのデフォルト設定</span>
        <span className="ml-auto text-[13px] text-[#222]">?</span>
        <svg width="11" height="11" viewBox="0 0 11 11" fill="none" stroke="#222" className="ml-[35px] mr-[18px]">
          <path d="M.5.5l10 10M10.500.5l-10 10" />
        </svg>
      </div>
      <div className="flex pt-[10px]">
        <div className="ml-[10px]"><LeftColumn /></div>
        <div className="relative -mt-[10px] h-[812px] w-[30px] shrink-0">
          <div className="absolute left-[12px] top-0 h-full w-[4px] bg-[#f5f5f5]" />
          <svg width="5" height="8" viewBox="0 0 5 8" className="absolute left-[9px] top-[4px]"><path d="M5 0L0 4l5 4z" fill="#333" /></svg>
        </div>
        <RightColumn />
      </div>
      <svg width="9" height="9" viewBox="0 0 9 9" fill="#999" className="absolute bottom-[1px] right-[2px]">
        <path d="M6 0h2v2H6zM3 3h2v2H3zM6 3h2v2H6zM0 6h2v2H0zM3 6h2v2H3zM6 6h2v2H6z" />
      </svg>
    </div>
  );
}
